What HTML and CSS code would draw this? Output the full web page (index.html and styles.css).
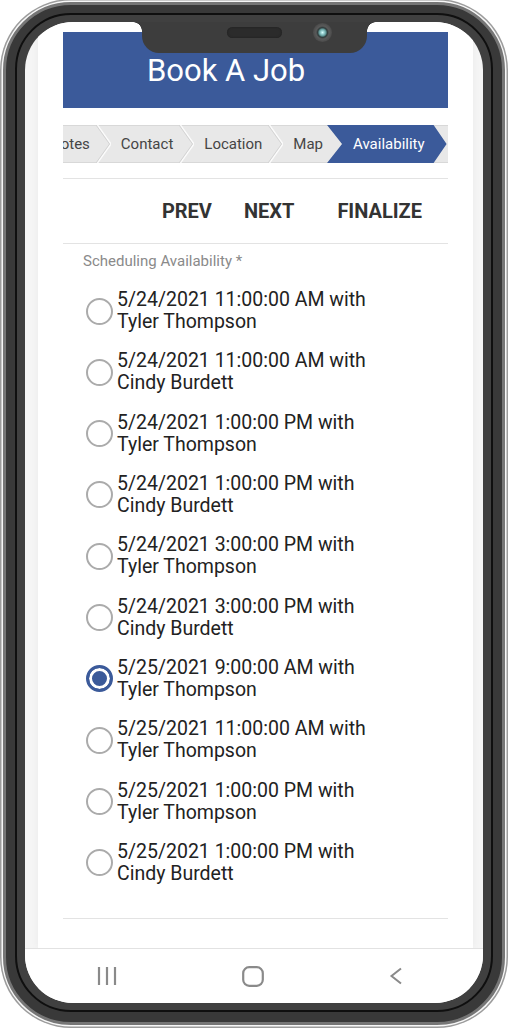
FILE: index.html
```html
<!DOCTYPE html>
<html lang="en">
<head>
<meta charset="utf-8">
<title>Book A Job</title>
<link rel="stylesheet" href="styles.css">
</head>
<body>
<div class="phone">
  <div class="bezel">
    <div class="screen">
      <div class="notch"><span class="speaker"></span><span class="camera"></span></div>
      <main class="page">
        <header class="hero"><h1 class="title">Book A Job</h1></header>
        <nav class="crumbs">
          <div class="crumb-track">
            <span class="crumb crumb-first">Notes</span>
            <svg class="sep" viewBox="0 0 15 38"><path d="M1.5 0 L15 19 L1.5 38" fill="none" stroke="#fbfbfb" stroke-width="1.4"/><path d="M0 0 L13.5 19 L0 38" fill="none" stroke="#d3d3d3" stroke-width="1"/></svg>
            <span class="crumb">Contact</span>
            <svg class="sep" viewBox="0 0 15 38"><path d="M1.5 0 L15 19 L1.5 38" fill="none" stroke="#fbfbfb" stroke-width="1.4"/><path d="M0 0 L13.5 19 L0 38" fill="none" stroke="#d3d3d3" stroke-width="1"/></svg>
            <span class="crumb">Location</span>
            <svg class="sep" viewBox="0 0 15 38"><path d="M1.5 0 L15 19 L1.5 38" fill="none" stroke="#fbfbfb" stroke-width="1.4"/><path d="M0 0 L13.5 19 L0 38" fill="none" stroke="#d3d3d3" stroke-width="1"/></svg>
            <span class="crumb">Map</span>
            <span class="crumb crumb-active">Availability</span>
          </div>
        </nav>
        <div class="rule rule-top"></div>
        <div class="actions">
          <button class="btn" type="button">PREV</button>
          <button class="btn" type="button">NEXT</button>
          <button class="btn btn-final" type="button">FINALIZE</button>
        </div>
        <div class="rule"></div>
        <div class="field-label">Scheduling Availability *</div>
        <ul class="options">
          <li class="option"><span class="radio"></span><span class="opt-text">5/24/2021 11:00:00 AM with<br>Tyler Thompson</span></li>
          <li class="option"><span class="radio"></span><span class="opt-text">5/24/2021 11:00:00 AM with<br>Cindy Burdett</span></li>
          <li class="option"><span class="radio"></span><span class="opt-text">5/24/2021 1:00:00 PM with<br>Tyler Thompson</span></li>
          <li class="option"><span class="radio"></span><span class="opt-text">5/24/2021 1:00:00 PM with<br>Cindy Burdett</span></li>
          <li class="option"><span class="radio"></span><span class="opt-text">5/24/2021 3:00:00 PM with<br>Tyler Thompson</span></li>
          <li class="option"><span class="radio"></span><span class="opt-text">5/24/2021 3:00:00 PM with<br>Cindy Burdett</span></li>
          <li class="option"><span class="radio radio-on"></span><span class="opt-text">5/25/2021 9:00:00 AM with<br>Tyler Thompson</span></li>
          <li class="option"><span class="radio"></span><span class="opt-text">5/25/2021 11:00:00 AM with<br>Tyler Thompson</span></li>
          <li class="option"><span class="radio"></span><span class="opt-text">5/25/2021 1:00:00 PM with<br>Tyler Thompson</span></li>
          <li class="option"><span class="radio"></span><span class="opt-text">5/25/2021 1:00:00 PM with<br>Cindy Burdett</span></li>
        </ul>
        <div class="rule rule-bottom"></div>
      </main>
      <footer class="navbar">
        <svg class="nav-icon" width="20" height="20" viewBox="0 0 20 20"><path d="M2 1v18M10 1v18M18 1v18" stroke="#8a8a8a" stroke-width="2.2" fill="none"/></svg>
        <svg class="nav-icon" width="22" height="21" viewBox="0 0 22 21"><rect x="1.2" y="1.2" width="19.6" height="18.6" rx="6" fill="none" stroke="#8a8a8a" stroke-width="2.2"/></svg>
        <svg class="nav-icon" width="14" height="18" viewBox="0 0 14 18"><path d="M12 1.5 2.5 9 12 16.5" fill="none" stroke="#8a8a8a" stroke-width="2"/></svg>
      </footer>
    </div>
  </div>
</div>
</body>
</html>
```
FILE: styles.css
```css
html, body {
  margin: 0;
  padding: 0;
  background: #fff;
}
body {
  font-family: Roboto, "Liberation Sans", sans-serif;
  height: 1030px;
  overflow: hidden;
}
.phone {
  margin: 2px 0 0 3px;
  width: 478px;
  border: 3px solid #767676;
  padding: 8px 9px 10px;
  border-radius: 68px;
  background: #393939;
  box-shadow: 0 0 0 1.5px #f7f7f7, 0 0 0 3px #9c9c9c;
}
.bezel {
  border: 2px solid #0f0f0f;
  padding: 7px 8px;
  border-radius: 56px;
  background: #404040;
}
.screen {
  position: relative;
  width: 458px;
  height: 981px;
  border-radius: 48px;
  overflow: hidden;
  background: #f5f5f5;
  display: flex;
  flex-direction: column;
}
.notch {
  position: absolute;
  top: 0;
  left: 117px;
  width: 225px;
  height: 31px;
  background: #3d3d3d;
  border-radius: 0 0 17px 17px;
  z-index: 2;
}
.notch::before,
.notch::after {
  content: "";
  position: absolute;
  top: 0;
  width: 9px;
  height: 9px;
}
.notch::before {
  left: -9px;
  background: radial-gradient(circle at 0 100%, transparent 8.5px, #3d3d3d 9px);
}
.notch::after {
  right: -9px;
  background: radial-gradient(circle at 100% 100%, transparent 8.5px, #3d3d3d 9px);
}
.speaker {
  position: absolute;
  left: 85px;
  top: 5px;
  width: 55px;
  height: 11px;
  border-radius: 6px;
  background: #2b2b2b;
  box-shadow: inset 0 0 2px #1c1c1c;
}
.camera {
  position: absolute;
  left: 171px;
  top: 1px;
  width: 19px;
  height: 19px;
  border-radius: 50%;
  background: radial-gradient(circle, #d6ffff 0, #8cc6c6 2px, #5f9696 3.5px, #2f3a3a 4.8px, #5a5a5a 6.5px, #4a4a4a 9.5px);
}
.page {
  flex: 1;
  margin: 0 10px 0 13px;
  padding: 10px 25px 0;
  background: #fff;
  box-shadow: 0 0 8px rgba(0, 0, 0, 0.05);
}
.hero {
  height: 76px;
  background: #3b5a9a;
  display: flex;
  align-items: center;
}
.title {
  margin: 0;
  padding-left: 84px;
  font-size: 31px;
  font-weight: 400;
  line-height: 31px;
  color: #fff;
}
.crumbs {
  margin-top: 17px;
  height: 38px;
  overflow: hidden;
  background: #e8e8e8;
  box-shadow: inset 0 1px #d8d8d8, inset 0 -1px #d8d8d8;
}
.crumb-track {
  display: flex;
  align-items: center;
  height: 38px;
  white-space: nowrap;
}
.crumb {
  font-size: 15px;
  line-height: 38px;
  color: #454545;
  padding: 0 6px 0 10px;
  flex: none;
}
.crumb-first {
  margin-left: -13px;
  padding-left: 0;
}
.sep {
  width: 15px;
  height: 38px;
  flex: none;
}
.crumb-active {
  margin-left: -2px;
  padding: 0 22px 0 26px;
  background: #3b5a9a;
  color: #fff;
  clip-path: polygon(0 0, calc(100% - 13px) 0, 100% 50%, calc(100% - 13px) 100%, 0 100%, 15px 50%);
}
.rule {
  height: 1px;
  background: #e3e3e3;
}
.rule-top {
  margin-top: 15px;
}
.rule-bottom {
  margin-top: 33px;
}
.actions {
  height: 64px;
  display: flex;
  align-items: center;
  justify-content: flex-end;
  padding-right: 10px;
}
.btn {
  margin: 0;
  padding: 0 16px;
  border: 0;
  background: none;
  font-family: Roboto, "Liberation Sans", sans-serif;
  font-size: 20px;
  font-weight: 700;
  line-height: 20px;
  color: #333;
}
.btn-final {
  margin-left: 11px;
}
.field-label {
  margin-top: 8px;
  padding-left: 20px;
  font-size: 15px;
  line-height: 18px;
  color: #8a8a8a;
}
.options {
  list-style: none;
  margin: 19px 0 0;
  padding: 0;
}
.option {
  display: flex;
  align-items: center;
  padding-left: 23px;
  margin-bottom: 17.33px;
}
.radio {
  flex: none;
  width: 23px;
  height: 23px;
  border: 2px solid #ababab;
  border-radius: 50%;
  margin-right: 4px;
}
.radio-on {
  width: 21px;
  height: 21px;
  border: 3px solid #3b5a9a;
  background: #3b5a9a;
  box-shadow: inset 0 0 0 3px #fff;
}
.opt-text {
  font-size: 19.5px;
  line-height: 22px;
  color: #222;
}
.navbar {
  height: 54px;
  border-top: 1px solid #e2e2e2;
  background: #fff;
  display: flex;
  align-items: center;
  justify-content: center;
  gap: 125px;
  padding-right: 8px;
}
.nav-icon {
  flex: none;
  display: block;
}
```
